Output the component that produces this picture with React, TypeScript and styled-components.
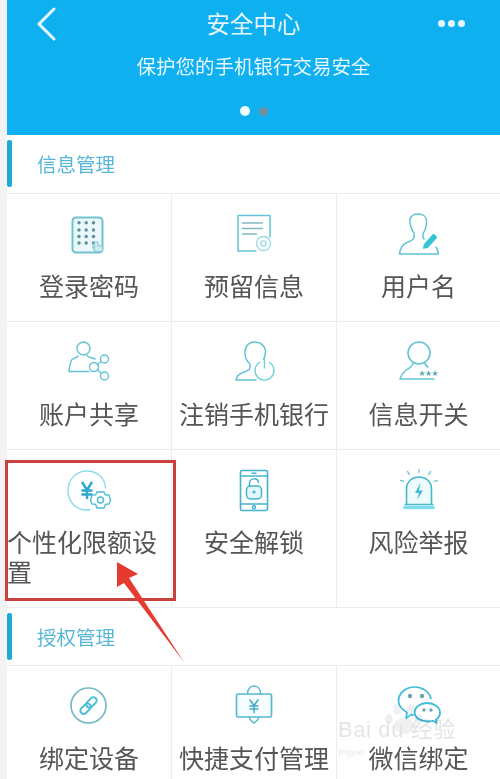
import React from "react";
import styled, { createGlobalStyle } from "styled-components";

const TEAL = "#62c3d6";

const GlobalStyle = createGlobalStyle`
  html, body {
    margin: 0;
    padding: 0;
    background: #f3f3f3;
  }
  * {
    box-sizing: border-box;
  }
`;

function IconBase({ color = TEAL, children }: { color?: string; children: React.ReactNode }) {
  return (
    <svg width="44" height="44" viewBox="0 0 44 44" fill="none" stroke={color} strokeWidth="1.4" strokeLinecap="round" strokeLinejoin="round">
      {children}
    </svg>
  );
}

function KeypadIcon() {
  const cols = [12, 19.2, 26.5];
  const rows = [10.7, 18, 24.5, 31];
  return (
    <IconBase color="#74c2cd">
      <rect x="5.5" y="5.5" width="30" height="35" rx="3.5" fill="#e9f8fb" strokeWidth="2" />
      {rows.map((y) =>
        cols.map((x) => <circle key={`${x}-${y}`} cx={x} cy={y} r="1.7" fill="#5f8e99" stroke="none" />)
      )}
      <path d="M27.5 30v6l-2-1.5 2.5 5h7.5v-5l-4.5-1.2V30z" fill="#cfecf1" stroke="#86ccd8" strokeWidth="1.2" />
    </IconBase>
  );
}

function DocIcon() {
  return (
    <IconBase>
      <path d="M24 39H6V3.5h32V25" strokeWidth="1.5" />
      <path d="M10.5 11h20M10.5 16.5h20M10.5 22h14" stroke="#7fb9c4" />
      <circle cx="31.5" cy="31.5" r="7" fill="#fff" stroke="#9ddbe7" />
      <circle cx="31.5" cy="31.5" r="2.6" stroke="#9ddbe7" />
    </IconBase>
  );
}

function UserEditIcon() {
  return (
    <IconBase>
      <path d="M13 7c1-3.5 4-5 8.5-5 5 0 8 3 8 7 0 5-.8 9-3.5 12.500v4l1 1.500M17 21c-2.500-3.500-4.500-8-4-14M17 21v4.500c0 2-3 3.500-7 5-3.500 1.300-6.500 3.500-7.500 11.500h39c-.3-2.500-1-5-2.500-7" strokeWidth="1.5" />
      <path d="M27.5 32.5l9-10 3 2.7-9 10-3.8.9z" fill="#35c5d2" stroke="#35c5d2" />
    </IconBase>
  );
}

function ShareIcon() {
  return (
    <IconBase>
      <circle cx="16.5" cy="8.5" r="6.5" />
      <path d="M11 16c-.5 2-4.500 2-6 3.500C3 22 2.500 27 2 31.500h20M20 15.500c1 2 5 2 8 3.500" />
      <circle cx="27" cy="27" r="4.5" />
      <circle cx="37.5" cy="19" r="4" />
      <circle cx="37.5" cy="36" r="4" />
      <path d="M30.5 24.5l3.8-3M30.5 29.5l3.8 4" />
    </IconBase>
  );
}

function PowerIcon() {
  return (
    <IconBase>
      <path d="M18 24c-3.500-3-5.500-7.500-5-13C13.500 5 18 2 23 2c6 0 10 4 10.500 9 .2 3-.8 6-2 8.500M18 24v4c0 2-3 3-7 4.500-4 1.500-6.500 3.500-7 7.500h20" strokeWidth="1.5" />
      <path d="M27.5 22.5a9.5 9.5 0 1 0 10 0" stroke="#6fd0dd" />
      <path d="M32.5 19v9" stroke="#6fd0dd" />
    </IconBase>
  );
}

function StarsIcon() {
  const stars = [25, 31.5, 38];
  return (
    <IconBase>
      <circle cx="22" cy="13" r="11" strokeWidth="1.6" />
      <path d="M16 23c0 3-3 4.500-6 6.500-3 2-5.500 5-7 9.500h34M28 23c0 1.500 1 3 3 4" strokeWidth="1.5" />
      {stars.map((x) => (
        <text key={x} x={x} y="36" fontSize="8" textAnchor="middle" fill="#5aa7b5" stroke="none" fontFamily="'DejaVu Sans', sans-serif">★</text>
      ))}
    </IconBase>
  );
}

function YenGearIcon() {
  return (
    <IconBase color="#8ed9ea">
      <path d="M23 40.5c-1 .3-2 .5-3.500.5C8.500 41 1 32 1 21.500 1 10.500 9 2 20 2c10 0 18 7 18.500 17" />
      <path d="M15 13l5 8 5-8M14.5 21.5h11M14.5 25.5h11M20 21v9" stroke="#2da7cf" strokeWidth="2.4" strokeLinecap="butt" />
      <path d="M30 23h7l1.500 2.800 3.500.2 1.500 5.500-1.500 3.500-3.500.2L37 39h-7l-1.500-3.800-3.500-.2-1.500-3.500L25 26l3.500-.2z" fill="#fff" stroke="#4cbbd8" />
      <circle cx="33.5" cy="31" r="3" stroke="#4cbbd8" />
    </IconBase>
  );
}

function PhoneLockIcon() {
  return (
    <IconBase color="#45b3cb">
      <rect x="8.5" y="1.5" width="27" height="40" rx="1.5" strokeWidth="1.6" />
      <path d="M8.5 7h27M8.5 35h27" />
      <path d="M20 4.2h4" />
      <circle cx="22" cy="38.3" r="1.5" />
      <rect x="14.5" y="17" width="15" height="13" rx="4" fill="#e6f7fb" strokeWidth="1.5" />
      <path d="M17.5 17v-2.5c0-6 8.5-6 9-1" strokeWidth="1.5" />
      <circle cx="22" cy="23" r="1.6" fill="#45b3cb" stroke="none" />
    </IconBase>
  );
}

function AlarmIcon() {
  return (
    <IconBase color="#45b9d1">
      <path d="M9.5 35V20c0-16 25-16 25 0v15" fill="#eefafc" strokeWidth="1.6" />
      <path d="M23.5 14L18 24h4l-2 7 6-9.500h-4z" fill="#45b9d1" stroke="none" />
      <path d="M8 35.5h28" strokeWidth="1.4" />
      <path d="M6.5 38.5h31" stroke="#7fdcef" strokeWidth="3.4" strokeLinecap="butt" />
      <path d="M22 0v3.5M10.5 2.5l2 3M33.5 2.5l-2 3M3.5 11.5l3 .8M40.5 11.5l-3 .8" stroke="#7fc8d6" />
    </IconBase>
  );
}

function LinkIcon() {
  return (
    <IconBase color="#78b9c6">
      <circle cx="21.5" cy="21.5" r="17.5" strokeWidth="1.7" />
      <g stroke="#49bcd9" strokeWidth="1.9">
        <rect x="12.5" y="21.5" width="12" height="6.5" rx="3.2" transform="rotate(-45 18.5 24.7)" />
        <rect x="18.5" y="15.2" width="12" height="6.5" rx="3.2" transform="rotate(-45 24.5 18.5)" />
      </g>
    </IconBase>
  );
}

function YenBagIcon() {
  return (
    <IconBase color="#59b8d2">
      <rect x="4.5" y="10" width="35" height="23" rx="1.5" fill="#f6fdfe" strokeWidth="1.7" />
      <path d="M15.5 10c0-4 2-8 6.5-8s6.5 4 6.5 8" />
      <path d="M17 33c1 3 3 5 5 6 2-1 4-3 5-6" />
      <path d="M18 16l4 5.5 4-5.5M18 22h8M18 25h8M22 21v7.5" stroke="#3ea9c6" strokeWidth="1.5" />
    </IconBase>
  );
}

function WechatIcon() {
  return (
    <IconBase color="#3fbcd9">
      <path d="M17 31c-.8 0-1.800-.2-2.500-.4L9 34l1-5.500C5 25.500 1.500 22 1.500 17 1.500 9 9 3 17.500 3 25.500 3 32 7.500 34 14.500" strokeWidth="1.7" />
      <circle cx="13" cy="12" r="2.2" fill="#6aa5b2" stroke="none" />
      <circle cx="25" cy="12" r="2.2" fill="#6aa5b2" stroke="none" />
      <path d="M30 19c7 0 13 4 13 9.5 0 3-1.5 5.5-4 7l.7 3.5-4-2.2c-7 2-18-1-18-8.300 0-5.500 5.500-9.500 12.300-9.500z" fill="#fff" strokeWidth="1.8" />
      <circle cx="27" cy="26" r="1.7" fill="#6aa5b2" stroke="none" />
      <circle cx="34" cy="26" r="1.7" fill="#6aa5b2" stroke="none" />
    </IconBase>
  );
}

const infoItems = [
  { label: "登录密码", Icon: KeypadIcon },
  { label: "预留信息", Icon: DocIcon },
  { label: "用户名", Icon: UserEditIcon },
  { label: "账户共享", Icon: ShareIcon },
  { label: "注销手机银行", Icon: PowerIcon },
  { label: "信息开关", Icon: StarsIcon },
  { label: "个性化限额设置", Icon: YenGearIcon },
  { label: "安全解锁", Icon: PhoneLockIcon },
  { label: "风险举报", Icon: AlarmIcon },
];

const authItems = [
  { label: "绑定设备", Icon: LinkIcon },
  { label: "快捷支付管理", Icon: YenBagIcon },
  { label: "微信绑定", Icon: WechatIcon },
];

export default function App() {
  return (
    <>
      <GlobalStyle />
      <Page>
        <Content>
          <Banner>
            <TopBar>
              <BackIcon width="30" height="40" viewBox="0 0 30 40" fill="none" stroke="#e8f8ff" strokeWidth="3" strokeLinecap="round" strokeLinejoin="round">
                <path d="M21 5L6 20l15 15" />
              </BackIcon>
              <BannerTitle>安全中心</BannerTitle>
              <MoreDots>
                <i />
                <i />
                <i />
              </MoreDots>
            </TopBar>
            <BannerSub>保护您的手机银行交易安全</BannerSub>
            <Pager>
              <PagerDot $active />
              <PagerDot />
            </Pager>
          </Banner>

          <SectionHeader>
            <SectionBar />
            <SectionTitle>信息管理</SectionTitle>
          </SectionHeader>
          <Grid>
            {infoItems.map(({ label, Icon }, i) => (
              <Cell key={label} $tall={i >= 6}>
                <Icon />
                <CellLabel>{label}</CellLabel>
              </Cell>
            ))}
          </Grid>

          <SectionHeader $compact>
            <SectionBar />
            <SectionTitle>授权管理</SectionTitle>
          </SectionHeader>
          <Grid>
            {authItems.map(({ label, Icon }) => (
              <Cell key={label}>
                <Icon />
                <CellLabel>{label}</CellLabel>
              </Cell>
            ))}
          </Grid>
        </Content>

        <Watermark>
          <svg width="44" height="34" viewBox="0 0 44 34" fill="#eef0f1">
            <ellipse cx="22" cy="24" rx="10" ry="8" />
            <ellipse cx="7" cy="17" rx="4" ry="5" />
            <ellipse cx="15" cy="7" rx="4" ry="5.5" />
            <ellipse cx="29" cy="7" rx="4" ry="5.5" />
            <ellipse cx="37" cy="17" rx="4" ry="5" />
          </svg>
          <WatermarkBrand>Bai du 经验</WatermarkBrand>
          <WatermarkUrl>jingyan</WatermarkUrl>
        </Watermark>
        <Callout />
        <Arrow width="500" height="779" viewBox="0 0 500 779">
          <path d="M117 562L138 574 129 578 184 662 124 583 117 587z" fill="#e53a2f" />
        </Arrow>
      </Page>
    </>
  );
}

const Page = styled.div`
  position: relative;
  width: 500px;
  height: 779px;
  padding-left: 7px;
  overflow: hidden;
  background: #f3f3f3;
  font-family: "Noto Sans CJK SC", "Noto Sans", sans-serif;
  filter: blur(0.45px);
`;

const Content = styled.div`
  background: #fff;
  min-height: 779px;
`;

const Banner = styled.div`
  height: 135px;
  display: flex;
  flex-direction: column;
  align-items: center;
  background: #0fb0f0;
  color: #e6f7ff;
`;

const TopBar = styled.div`
  width: 100%;
  height: 47px;
  display: grid;
  grid-template-columns: 1fr auto 1fr;
  align-items: center;
  padding: 0 35px 0 26px;
`;

const BackIcon = styled.svg`
  display: block;
`;

const BannerTitle = styled.div`
  font-size: 23.5px;
  line-height: 47px;
  margin-left: 9px;
`;

const MoreDots = styled.div`
  display: flex;
  justify-content: flex-end;
  gap: 3px;

  i {
    width: 7px;
    height: 7px;
    border-radius: 50%;
    background: #e6f7ff;
  }
`;

const BannerSub = styled.div`
  margin-top: 5px;
  font-size: 19.5px;
  line-height: 28px;
`;

const Pager = styled.div`
  display: flex;
  align-items: center;
  gap: 9px;
  margin-top: 26px;
  margin-left: 1px;
`;

const PagerDot = styled.span<{ $active?: boolean }>`
  width: ${(p) => (p.$active ? "10px" : "9px")};
  height: ${(p) => (p.$active ? "10px" : "9px")};
  border-radius: 50%;
  background: ${(p) => (p.$active ? "#f2fcff" : "#6f8f9e")};
`;

const SectionHeader = styled.div<{ $compact?: boolean }>`
  height: ${(p) => (p.$compact ? "57px" : "58px")};
  display: flex;
  align-items: center;
  gap: 25px;
  padding-bottom: 1px;
`;

const SectionBar = styled.span`
  width: 5px;
  height: 47px;
  border-radius: 2px;
  background: #20aad6;
`;

const SectionTitle = styled.div`
  font-size: 19.5px;
  color: #58b7d6;
`;

const Grid = styled.div`
  display: grid;
  grid-template-columns: 165px 165px 163px;
  border-top: 1px solid #ececec;
`;

const Cell = styled.div<{ $tall?: boolean }>`
  height: ${(p) => (p.$tall ? "158px" : "128px")};
  display: flex;
  flex-direction: column;
  align-items: center;
  gap: ${(p) => (p.$tall ? "13px" : "14px")};
  padding-top: ${(p) => (p.$tall ? "19px" : "18px")};
  border-right: 1px solid #ececec;
  border-bottom: 1px solid #ececec;

  &:nth-child(3n) {
    border-right: none;
  }
`;

const CellLabel = styled.div`
  font-size: 25px;
  line-height: 30px;
  color: #555;
  text-align: left;
`;

const Callout = styled.div`
  position: absolute;
  left: 5px;
  top: 460px;
  width: 171px;
  height: 141px;
  border: 3px solid #c9403f;
`;

const Arrow = styled.svg`
  position: absolute;
  left: 0;
  top: 0;
  pointer-events: none;
`;

const Watermark = styled.div`
  position: absolute;
  left: 338px;
  top: 702px;
  width: 125px;
  display: flex;
  flex-direction: column;
  align-items: flex-start;
  pointer-events: none;
  mix-blend-mode: multiply;

  svg {
    margin-left: 44px;
    margin-bottom: -15px;
  }
`;

const WatermarkBrand = styled.div`
  font-family: "Liberation Sans", "Noto Sans CJK SC", sans-serif;
  font-size: 22px;
  line-height: 18px;
  letter-spacing: 0.6px;
  color: #e2e4e6;
  white-space: nowrap;
`;

const WatermarkUrl = styled.div`
  margin-top: 8px;
  font-family: "Liberation Sans", sans-serif;
  font-size: 8.5px;
  line-height: 11px;
  color: #e6e8ea;
`;
